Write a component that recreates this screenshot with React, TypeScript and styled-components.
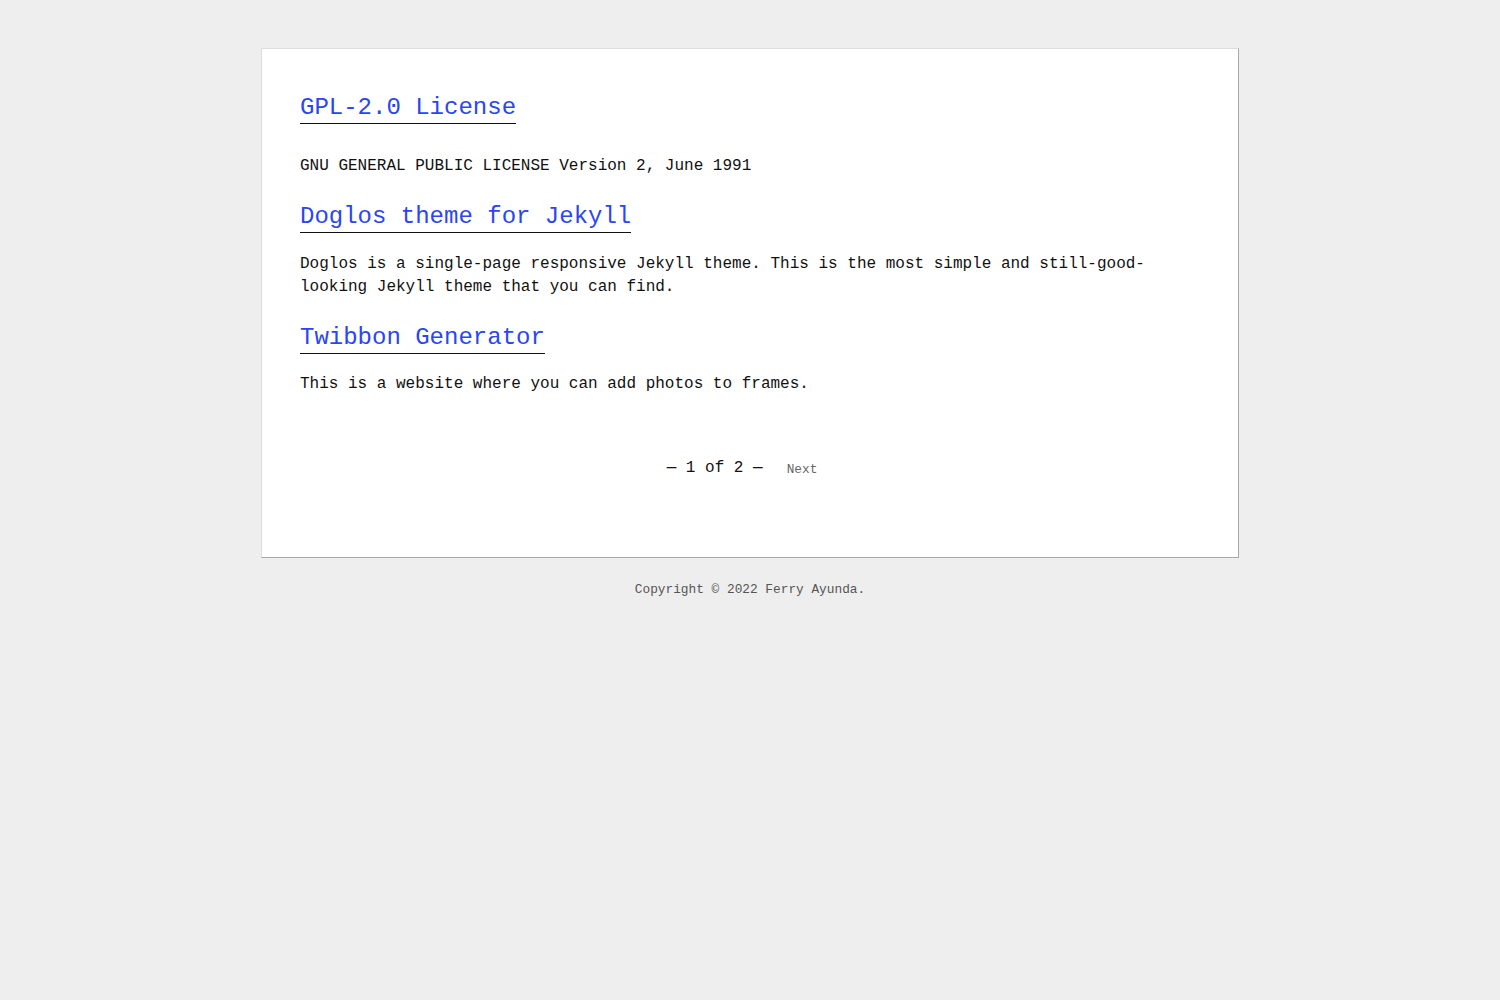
import React from "react";
import styled, { createGlobalStyle } from "styled-components";

const GlobalStyle = createGlobalStyle`
	html, body {
		margin: 0;
		padding: 0;
		background-color: #eeeeee;
	}
	body {
		font-family: "Liberation Mono", "DejaVu Sans Mono", monospace;
		color: #111;
	}
`;

const Page = styled.div`
	min-height: 1000px;
	display: flex;
	flex-direction: column;
	align-items: center;
	padding-top: 48px;
	box-sizing: border-box;
`;

const Card = styled.main`
	box-sizing: border-box;
	width: 978px;
	background-color: #fff;
	border-top: 1px solid #dcdcdc;
	border-left: 1px solid #dcdcdc;
	border-right: 1px solid #a9a9a9;
	border-bottom: 1px solid #a9a9a9;
	padding: 45px 38px 76px;
	display: flex;
	flex-direction: column;
`;

const Post = styled.article<{ $first?: boolean }>`
	display: flex;
	flex-direction: column;
	align-items: flex-start;
	margin-top: ${(p) => (p.$first ? "0" : "25px")};
`;

const Title = styled.h2`
	margin: 0;
	font-size: 24px;
	font-weight: 400;
	line-height: 28px;
`;

const TitleLink = styled.a`
	display: inline-block;
	color: #2a45f4;
	text-decoration: none;
	border-bottom: 1px solid #111;
	padding-bottom: 1px;
`;

const Excerpt = styled.p<{ $gap: number }>`
	margin: ${(p) => p.$gap}px 0 0;
	font-size: 16px;
	line-height: 23px;
	max-width: 860px;
`;

const Pagination = styled.nav`
	margin-top: 60px;
	display: flex;
	justify-content: center;
	align-items: center;
	gap: 24px;
	padding-right: 16px;
	line-height: 23px;
`;

const PageCount = styled.span`
	font-size: 16px;
	color: #111;
`;

const NextLink = styled.a`
	font-size: 12.8px;
	color: #666;
	text-decoration: none;
	padding-top: 2px;
`;

const Footer = styled.footer`
	margin-top: 23px;
	font-size: 12.8px;
	line-height: 18px;
	color: #555;
	text-align: center;
`;

const posts = [
	{
		title: "GPL-2.0 License",
		excerpt: "GNU GENERAL PUBLIC LICENSE Version 2, June 1991",
		gap: 31,
	},
	{
		title: "Doglos theme for Jekyll",
		excerpt:
			"Doglos is a single-page responsive Jekyll theme. This is the most simple and still-good-looking Jekyll theme that you can find.",
		gap: 20,
	},
	{
		title: "Twibbon Generator",
		excerpt: "This is a website where you can add photos to frames.",
		gap: 19,
	},
];

const App = () => {
	return (
		<>
			<GlobalStyle />
			<Page>
				<Card>
					{posts.map((post, i) => (
						<Post key={post.title} $first={i === 0}>
							<Title>
								<TitleLink href="#">{post.title}</TitleLink>
							</Title>
							<Excerpt $gap={post.gap}>{post.excerpt}</Excerpt>
						</Post>
					))}
					<Pagination>
						<PageCount>— 1 of 2 —</PageCount>
						<NextLink href="#">Next</NextLink>
					</Pagination>
				</Card>
				<Footer>Copyright © 2022 Ferry Ayunda.</Footer>
			</Page>
		</>
	);
};

export default App;
